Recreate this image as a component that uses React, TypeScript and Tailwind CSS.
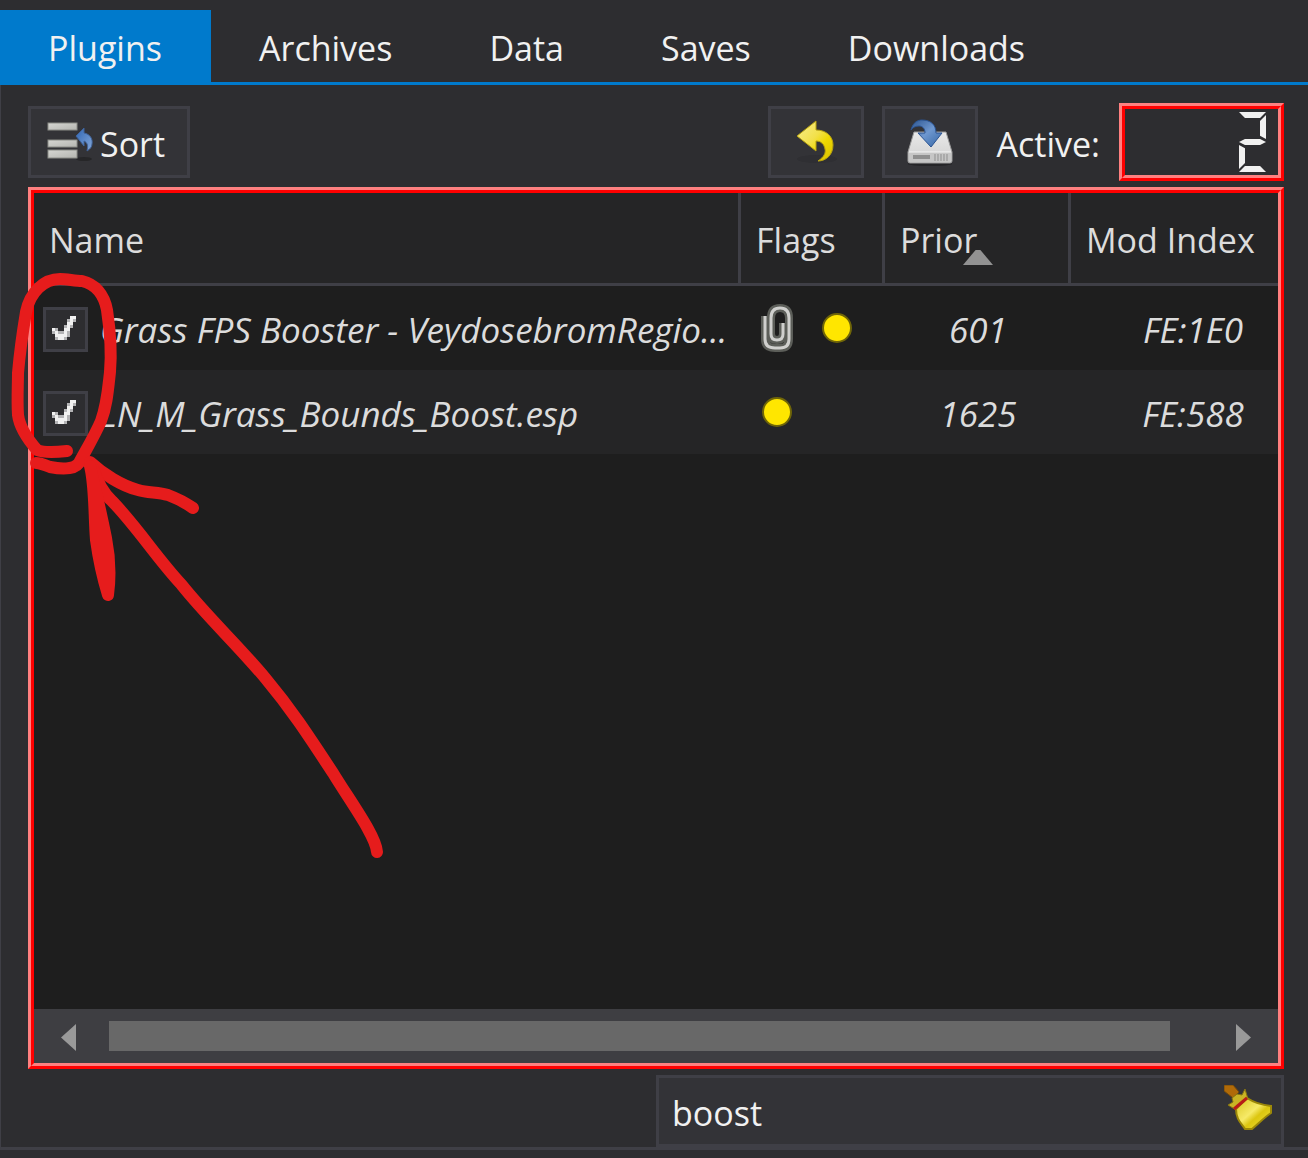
import { useState } from 'react';
import clsx from 'clsx';

interface Plugin {
  name: string;
  label: string;
  flags: ('clip' | 'light')[];
  priority: number;
  modIndex: string;
}

const TABS = ['Plugins', 'Archives', 'Data', 'Saves', 'Downloads'];

const PLUGINS: Plugin[] = [
  {
    name: 'veydosebrom',
    label: 'Grass FPS Booster - VeydosebromRegio...',
    flags: ['clip', 'light'],
    priority: 601,
    modIndex: 'FE:1E0',
  },
  {
    name: 'bounds',
    label: 'LN_M_Grass_Bounds_Boost.esp',
    flags: ['light'],
    priority: 1625,
    modIndex: 'FE:588',
  },
];

const CHECK_PIXELS = [
  '......##',
  '.....+#+',
  '.....##.',
  '....+#+.',
  '#+..##..',
  '+#++#+..',
  '.####+..',
  '.+##+...',
];

function SortIcon() {
  return (
    <svg viewBox="0 0 48 48" className="size-12 shrink-0" aria-hidden="true">
      <defs>
        <linearGradient id="bar" x1="0" y1="0" x2="1" y2="1">
          <stop offset="0" stopColor="#d6d6d2" />
          <stop offset="1" stopColor="#b4b5b0" />
        </linearGradient>
        <linearGradient id="blueArrow" x1="0" y1="0" x2="1" y2="1">
          <stop offset="0" stopColor="#2f66b4" />
          <stop offset="1" stopColor="#86a9da" />
        </linearGradient>
      </defs>
      <ellipse cx="38" cy="41" rx="8" ry="2" fill="#262628" />
      <g fill="url(#bar)" stroke="#8c8d88" strokeWidth="1">
        <rect x="2" y="5" width="29" height="7" />
        <rect x="2" y="22" width="29" height="7" />
        <rect x="2" y="32" width="29" height="8" />
      </g>
      <path
        d="M30 18 L38 10 V15 C44 16 47 21 46 26 C46 29 44 31 41 33 C42 28 42 25 38 23 V28 Z"
        fill="url(#blueArrow)"
        stroke="#3f6299"
        strokeWidth="1"
      />
    </svg>
  );
}

function UndoIcon() {
  return (
    <svg viewBox="0 0 48 48" className="size-12" aria-hidden="true">
      <defs>
        <linearGradient id="undo" x1="0" y1="0" x2="1" y2="1">
          <stop offset="0" stopColor="#f8ee90" />
          <stop offset="0.45" stopColor="#f2e04a" />
          <stop offset="0.65" stopColor="#eed800" />
          <stop offset="1" stopColor="#d8c000" />
        </linearGradient>
      </defs>
      <ellipse cx="25" cy="41" rx="20" ry="4" fill="#2f2f33" />
      <path
        d="M5 18 L24 3 V12 C35 12 41 19 41 27 C41 37 34 43 26 43 C32 39 34 35 33 31 C32 26 29 23 24 23 V33 Z"
        fill="url(#undo)"
        stroke="#b5a010"
        strokeWidth="1"
      />
    </svg>
  );
}

function SaveIcon() {
  return (
    <svg viewBox="0 0 48 48" className="size-12" aria-hidden="true">
      <defs>
        <linearGradient id="lid" x1="0" y1="0" x2="0" y2="1">
          <stop offset="0" stopColor="#e9e9e9" />
          <stop offset="1" stopColor="#cfcfcf" />
        </linearGradient>
        <linearGradient id="drop" x1="0" y1="0" x2="1" y2="1">
          <stop offset="0" stopColor="#2c5590" />
          <stop offset="0.5" stopColor="#6e97cf" />
          <stop offset="1" stopColor="#3465a4" />
        </linearGradient>
      </defs>
      <ellipse cx="24" cy="46" rx="22" ry="2" fill="#252528" />
      <path d="M8 14 H40 L46 34 V43 Q46 45 44 45 H4 Q2 45 2 43 V34 Z" fill="url(#lid)" stroke="#9a9a9a" strokeWidth="1" />
      <path d="M3 34 H45 V44 H3 Z" fill="#c6c6c6" />
      <path d="M3 34 H45" stroke="#f4f4f4" strokeWidth="1" />
      <rect x="7" y="37" width="17" height="4" fill="#8f8f8f" />
      <path d="M29 36 V43 M32 36 V43 M35 36 V43 M38 36 V43 M41 36 V43" stroke="#8f8f8f" strokeWidth="1" />
      <path
        d="M5 12 C7 4 12 2 16 2 C25 2 30 7 30 15 H36 L25 29 L12 15 H19 C19 10 16 8 13 8 C10 8 7 9 5 12 Z"
        fill="url(#drop)"
        stroke="#2a5392"
        strokeWidth="1"
      />
    </svg>
  );
}

function BroomIcon() {
  return (
    <svg viewBox="0 0 48 48" className="size-12" aria-hidden="true">
      <defs>
        <linearGradient id="bristles" x1="0" y1="0" x2="1" y2="1">
          <stop offset="0" stopColor="#d8c41c" />
          <stop offset="0.45" stopColor="#f6ea68" />
          <stop offset="0.6" stopColor="#dcc610" />
          <stop offset="1" stopColor="#f2e23c" />
        </linearGradient>
      </defs>
      <path d="M0 0 H9 L15 7 L9 13 L0 6 Z" fill="#b06a08" stroke="#70480c" strokeWidth="1" />
      <path d="M21 4 L18 10 L13 9 L8 13 L9 17 L4 20 L12 25 L24 14 Z" fill="#c9b424" stroke="#857310" strokeWidth="1" />
      <path d="M23 13 C29 17 37 20 47 21 V28 C42 31 35 38 28 44 H21 C17 38 12 34 12 24 Z" fill="url(#bristles)" stroke="#9c8808" strokeWidth="2" />
      <path d="M23 13 L10 24" stroke="#b81c18" strokeWidth="3" />
    </svg>
  );
}

function ClipIcon() {
  const wire = 'M4 12 V35 Q4 44 14 44 H19 Q28 44 28 35 V14 Q28 4 19 4 Q10 4 10 14 V30 Q10 36 16 36 Q22 36 22 30 V19';
  return (
    <svg viewBox="-8 0 48 48" className="size-12" role="img" aria-label="Attached archive">
      <g fill="none">
        <path d={wire} stroke="#5c5e59" strokeWidth="8" />
        <path d={wire} stroke="#cfcfcd" strokeWidth="3" />
      </g>
    </svg>
  );
}

function LightIcon() {
  return (
    <svg viewBox="0 0 48 48" className="size-12" role="img" aria-label="Light plugin">
      <circle cx="24" cy="24" r="14" fill="#ffe600" stroke="#6f6508" strokeWidth="2" />
    </svg>
  );
}

function CheckMark() {
  return (
    <svg viewBox="0 0 8 8" shapeRendering="crispEdges" className="pointer-events-none col-start-1 row-start-1 mb-[3px] mr-[3px] hidden size-6 peer-checked:block" aria-hidden="true">
      {CHECK_PIXELS.flatMap((row, y) =>
        [...row].map((c, x) =>
          c === '.' ? null : <rect key={`${x}-${y}`} x={x} y={y} width="1" height="1" fill={c === '#' ? '#f1f1f1' : '#b4b4b6'} />
        )
      )}
    </svg>
  );
}

// lit segments of the seven-segment counter
function LcdTwo() {
  return (
    <span className="relative block h-[60px] w-[27px] *:absolute *:bg-[#f1f1f1]" role="img" aria-label="2">
      <i className="left-0 top-0 h-[6px] w-full [clip-path:polygon(0_0,100%_0,78%_100%,22%_100%)]" />
      <i className="right-0 top-[3px] h-6 w-[6px] [clip-path:polygon(0_25%,100%_0,100%_100%,0_86%)]" />
      <i className="left-0 top-[27px] h-[6px] w-full [clip-path:polygon(0_50%,22%_0,78%_0,100%_50%,78%_100%,22%_100%)]" />
      <i className="left-0 top-[33px] h-6 w-[6px] [clip-path:polygon(0_0,100%_14%,100%_75%,0_100%)]" />
      <i className="bottom-0 left-0 h-[6px] w-full [clip-path:polygon(22%_0,78%_0,100%_100%,0_100%)]" />
    </span>
  );
}

function RidgeFrame({ className, children }: { className?: string; children: React.ReactNode }) {
  return (
    <div className={clsx('flex flex-col border-[3px] border-b-[#ff0000] border-l-[#ff8080] border-r-[#ff0000] border-t-[#ff8080]', className)}>
      <div className="flex min-w-0 flex-1 flex-col border-[3px] border-b-[#ff8080] border-l-[#ff0000] border-r-[#ff8080] border-t-[#ff0000]">
        {children}
      </div>
    </div>
  );
}

// hand drawn marker strokes laid over the list
function MarkerOverlay() {
  return (
    <svg width="400" height="880" viewBox="0 0 400 880" className="pointer-events-none absolute left-0 top-0" aria-hidden="true">
      <g fill="none" stroke="#e61c1c" strokeWidth="12" strokeLinecap="round" strokeLinejoin="round">
        <path d="M67 451 C58 452 44 453 37 450 C30 442 20 430 18 415 C17 400 18 385 18 373 C20 350 23 330 26 312 C30 292 44 279 60 279 C67 279 75 281 82 281 C95 284 104 294 107 310 C110 330 112 350 110 372 C108 390 107 405 101 421 C95 435 86 450 79 463 C74 470 60 469 50 467 C45 465 40 463 36 463" />
        <path d="M90 462 C103 474 122 486 138 490 C148 493 158 492 168 495 C176 498 186 503 193 508" />
        <path d="M92 466 C98 484 104 494 112 501 C138 528 156 557 181 584 C208 618 238 645 266 679 C292 710 310 738 333 773 C350 801 376 836 377 852" />
        <path d="M90 466 C95 485 94 515 96 540 C99 562 104 582 108 595 C110 580 110 558 106 538 C102 518 98 500 92 475 Z" fill="#e61c1c" />
      </g>
    </svg>
  );
}

export default function App() {
  const [tab, setTab] = useState('Plugins');
  const [filter, setFilter] = useState('boost');
  const [disabled, setDisabled] = useState<string[]>([]);

  function toggle(name: string) {
    setDisabled(prev => (prev.includes(name) ? prev.filter(n => n !== name) : [...prev, name]));
  }

  return (
    <div className="relative flex min-h-screen flex-col bg-[#2d2d30] pb-2 pt-[10px] font-['Open_Sans',sans-serif] text-[34px] leading-[48px] text-[#f1f1f1]">
      <nav className="flex border-b-[3px] border-[#007acc]" role="tablist">
        {TABS.map(t => (
          <button
            key={t}
            type="button"
            role="tab"
            aria-selected={tab === t}
            onClick={() => setTab(t)}
            className={clsx('h-[72px] pl-12 pr-[49px] pt-1', tab === t && 'bg-[#007acc]')}
          >
            {t}
          </button>
        ))}
      </nav>

      <main className="flex flex-1 flex-col gap-[6px] border-b-[3px] border-l border-[#3f3f46] pl-[27px] pr-6 pt-[18px]">
        <div className="flex items-center gap-[18px]">
          <button type="button" className="mr-auto flex h-[72px] items-center gap-[6px] border-[3px] border-[#3f3f46] bg-[#333337] pl-[15px] pr-[22px]">
            <SortIcon />
            <span className="pt-1">Sort</span>
          </button>
          <button type="button" aria-label="Restore backup" className="flex h-[72px] w-24 items-center justify-center border-[3px] border-[#3f3f46] bg-[#333337]">
            <UndoIcon />
          </button>
          <button type="button" aria-label="Create backup" className="flex h-[72px] w-24 items-center justify-center border-[3px] border-[#3f3f46] bg-[#333337]">
            <SaveIcon />
          </button>
          <span className="px-px pt-1">Active:</span>
          <RidgeFrame className="h-[78px] w-[165px]">
            <div className="flex flex-1 items-center justify-end pr-3">
              <LcdTwo />
            </div>
          </RidgeFrame>
        </div>

        <RidgeFrame className="flex-1 bg-[#1e1e1e]">
          <table className="w-full table-fixed border-separate border-spacing-0 text-[#dcdcdc]">
            <colgroup>
              <col />
              <col className="w-36" />
              <col className="w-[186px]" />
              <col className="w-[210px]" />
            </colgroup>
            <thead>
              <tr className="h-[93px] bg-[#252526] text-left *:border-b-[3px] *:border-[#3f3f46] *:pl-[15px] *:pt-1 *:font-normal">
                <th>Name</th>
                <th className="border-l-[3px]">Flags</th>
                <th className="relative border-l-[3px]">
                  Prior
                  <span className="absolute left-[78px] top-[57px] h-[15px] w-[30px] bg-[#929292] [clip-path:polygon(42%_0,58%_0,100%_100%,0_100%)]" />
                </th>
                <th className="whitespace-nowrap border-l-[3px]">Mod Index</th>
              </tr>
            </thead>
            <tbody className="text-[35px] italic">
              {PLUGINS.map(p => (
                <tr key={p.name} className="h-[84px] odd:bg-[#1e1e1e] even:bg-[#252526]">
                  <td className="pl-[9px]">
                    <label className="flex items-center gap-3 overflow-hidden whitespace-nowrap pt-[2px]">
                      <span className="grid shrink-0 place-items-center">
                        <input
                          type="checkbox"
                          checked={!disabled.includes(p.name)}
                          onChange={() => toggle(p.name)}
                          className="peer col-start-1 row-start-1 size-[45px] appearance-none border-[3px] border-[#3f3f46] bg-[#2d2d30]"
                        />
                        <CheckMark />
                      </span>
                      <span className="pt-[2px]">{p.label}</span>
                    </label>
                  </td>
                  <td className="pl-[15px]">
                    <div className="flex gap-3">
                      {p.flags.map(f => (f === 'clip' ? <ClipIcon key={f} /> : <LightIcon key={f} />))}
                    </div>
                  </td>
                  <td className="pl-[6px] pt-1 text-center">{p.priority}</td>
                  <td className="pl-10 pt-1 text-center">{p.modIndex}</td>
                </tr>
              ))}
            </tbody>
          </table>

          <div className="mt-auto flex h-[54px] items-center justify-between bg-[#3e3e42] px-[27px]">
            <button type="button" aria-label="Scroll left" className="mt-[3px] h-[27px] w-[15px] bg-[#999999] [clip-path:polygon(100%_0,100%_100%,0_50%)]" />
            <div className="ml-[33px] mr-[66px] h-[30px] flex-1 bg-[#686868]" />
            <button type="button" aria-label="Scroll right" className="mt-[3px] h-[27px] w-[15px] bg-[#999999] [clip-path:polygon(0_0,100%_50%,0_100%)]" />
          </div>
        </RidgeFrame>

        <div className="flex h-[72px] w-1/2 items-center self-end border-[3px] border-[#3f3f46] bg-[#333337] pl-[13px] pr-[9px]">
          <input
            type="text"
            aria-label="Filter"
            value={filter}
            onChange={e => setFilter(e.target.value)}
            className="min-w-0 flex-1 bg-transparent pt-1 outline-none"
          />
          <button type="button" aria-label="Clear filter" onClick={() => setFilter('')} className="mb-1">
            <BroomIcon />
          </button>
        </div>
      </main>

      <MarkerOverlay />
    </div>
  );
}
